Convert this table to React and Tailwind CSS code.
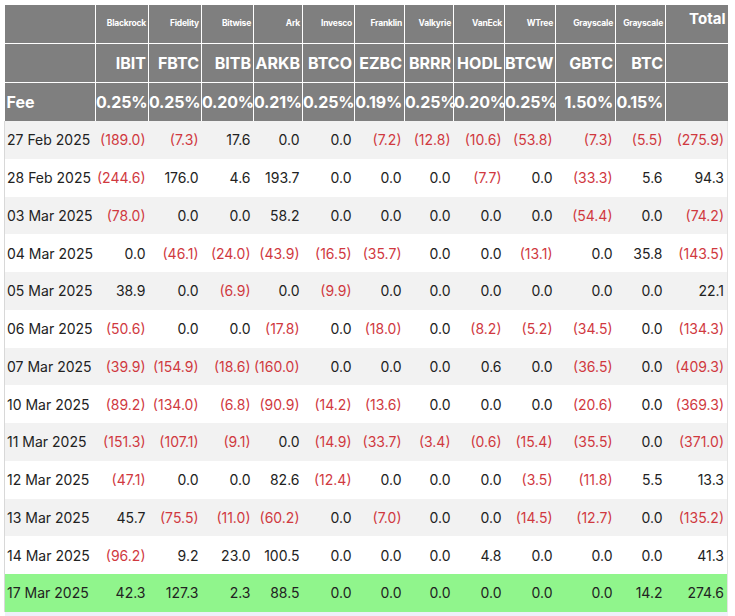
import React from "react";

const ISSUERS = ["Blackrock", "Fidelity", "Bitwise", "Ark", "Invesco", "Franklin", "Valkyrie", "VanEck", "WTree", "Grayscale", "Grayscale"];
const TICKERS = ["IBIT", "FBTC", "BITB", "ARKB", "BTCO", "EZBC", "BRRR", "HODL", "BTCW", "GBTC", "BTC"];
const FEES = ["0.25%", "0.25%", "0.20%", "0.21%", "0.25%", "0.19%", "0.25%", "0.20%", "0.25%", "1.50%", "0.15%"];
const WIDTHS = ["w-[91px]", "w-[53px]", "w-[53px]", "w-[52px]", "w-[49px]", "w-[52px]", "w-[50px]", "w-[49px]", "w-[51px]", "w-[51px]", "w-[60px]", "w-[50px]", "w-[62px]"];

const ROWS = [
  ["27 Feb 2025", "(189.0)", "(7.3)", "17.6", "0.0", "0.0", "(7.2)", "(12.8)", "(10.6)", "(53.8)", "(7.3)", "(5.5)", "(275.9)"],
  ["28 Feb 2025", "(244.6)", "176.0", "4.6", "193.7", "0.0", "0.0", "0.0", "(7.7)", "0.0", "(33.3)", "5.6", "94.3"],
  ["03 Mar 2025", "(78.0)", "0.0", "0.0", "58.2", "0.0", "0.0", "0.0", "0.0", "0.0", "(54.4)", "0.0", "(74.2)"],
  ["04 Mar 2025", "0.0", "(46.1)", "(24.0)", "(43.9)", "(16.5)", "(35.7)", "0.0", "0.0", "(13.1)", "0.0", "35.8", "(143.5)"],
  ["05 Mar 2025", "38.9", "0.0", "(6.9)", "0.0", "(9.9)", "0.0", "0.0", "0.0", "0.0", "0.0", "0.0", "22.1"],
  ["06 Mar 2025", "(50.6)", "0.0", "0.0", "(17.8)", "0.0", "(18.0)", "0.0", "(8.2)", "(5.2)", "(34.5)", "0.0", "(134.3)"],
  ["07 Mar 2025", "(39.9)", "(154.9)", "(18.6)", "(160.0)", "0.0", "0.0", "0.0", "0.6", "0.0", "(36.5)", "0.0", "(409.3)"],
  ["10 Mar 2025", "(89.2)", "(134.0)", "(6.8)", "(90.9)", "(14.2)", "(13.6)", "0.0", "0.0", "0.0", "(20.6)", "0.0", "(369.3)"],
  ["11 Mar 2025", "(151.3)", "(107.1)", "(9.1)", "0.0", "(14.9)", "(33.7)", "(3.4)", "(0.6)", "(15.4)", "(35.5)", "0.0", "(371.0)"],
  ["12 Mar 2025", "(47.1)", "0.0", "0.0", "82.6", "(12.4)", "0.0", "0.0", "0.0", "(3.5)", "(11.8)", "5.5", "13.3"],
  ["13 Mar 2025", "45.7", "(75.5)", "(11.0)", "(60.2)", "0.0", "(7.0)", "0.0", "0.0", "(14.5)", "(12.7)", "0.0", "(135.2)"],
  ["14 Mar 2025", "(96.2)", "9.2", "23.0", "100.5", "0.0", "0.0", "0.0", "4.8", "0.0", "0.0", "0.0", "41.3"],
  ["17 Mar 2025", "42.3", "127.3", "2.3", "88.5", "0.0", "0.0", "0.0", "0.0", "0.0", "0.0", "14.2", "274.6"],
];

function rowBg(i) {
  if (i === ROWS.length - 1) return "bg-[#90f58c]";
  return i % 2 === 0 ? "bg-[#f2f2f2]" : "bg-white";
}

export default function App() {
  return (
    <div className="w-[735px] h-[616px] bg-white overflow-hidden pt-[5px] pl-[4px] font-['Inter',sans-serif] text-[#222]">
      <table className="table-fixed border-collapse w-[723px]">
        <colgroup>
          {WIDTHS.map((w, i) => (
            <col key={i} className={w} />
          ))}
        </colgroup>
        <thead>
          <tr className="h-[38px] bg-[#7f7f7f] text-white">
            <th className="border-r border-white"></th>
            {ISSUERS.map((n, i) => (
              <th key={i} className="border-r border-white text-right align-middle pr-[2px] text-[8.5px] font-bold tracking-tight">
                {n}
              </th>
            ))}
            <th className="text-right pr-[2px] align-top pt-[3px] text-[15px] font-bold">Total</th>
          </tr>
          <tr className="h-[39px] bg-[#7f7f7f] text-white border-t border-white">
            <th className="border-r border-white"></th>
            {TICKERS.map((t, i) => (
              <th key={i} className="border-r border-white text-right pr-[2px] text-[16px] font-bold whitespace-nowrap">
                {t}
              </th>
            ))}
            <th></th>
          </tr>
          <tr className="h-[39px] bg-[#7f7f7f] text-white border-t border-white">
            <th className="border-r border-white text-left pl-[2px] text-[16px] font-bold">Fee</th>
            {FEES.map((f, i) => (
              <th key={i} className="border-r border-white text-right pr-[2px] text-[16px] font-bold whitespace-nowrap tracking-[-0.2px]">
                {f}
              </th>
            ))}
            <th></th>
          </tr>
        </thead>
        <tbody>
          {ROWS.map((r, i) => (
            <tr key={r[0]} className={`h-[37.75px] ${rowBg(i)}`}>
              {r.map((v, j) => (
                <td
                  key={j}
                  className={`text-[14px] whitespace-nowrap ${
                    j === 0 ? "text-left pl-[2px] border-l border-[#d8d8d8]" : "text-right pr-[3px]"
                  } ${j === r.length - 1 ? "border-r border-[#e4e4e4]" : ""} ${
                    v.startsWith("(") ? "text-[#d0393f]" : ""
                  }`}
                >
                  {v}
                </td>
              ))}
            </tr>
          ))}
          <tr className="h-[10px] bg-[#eef0f9]">
            <td colSpan={13}></td>
          </tr>
        </tbody>
      </table>
    </div>
  );
}
